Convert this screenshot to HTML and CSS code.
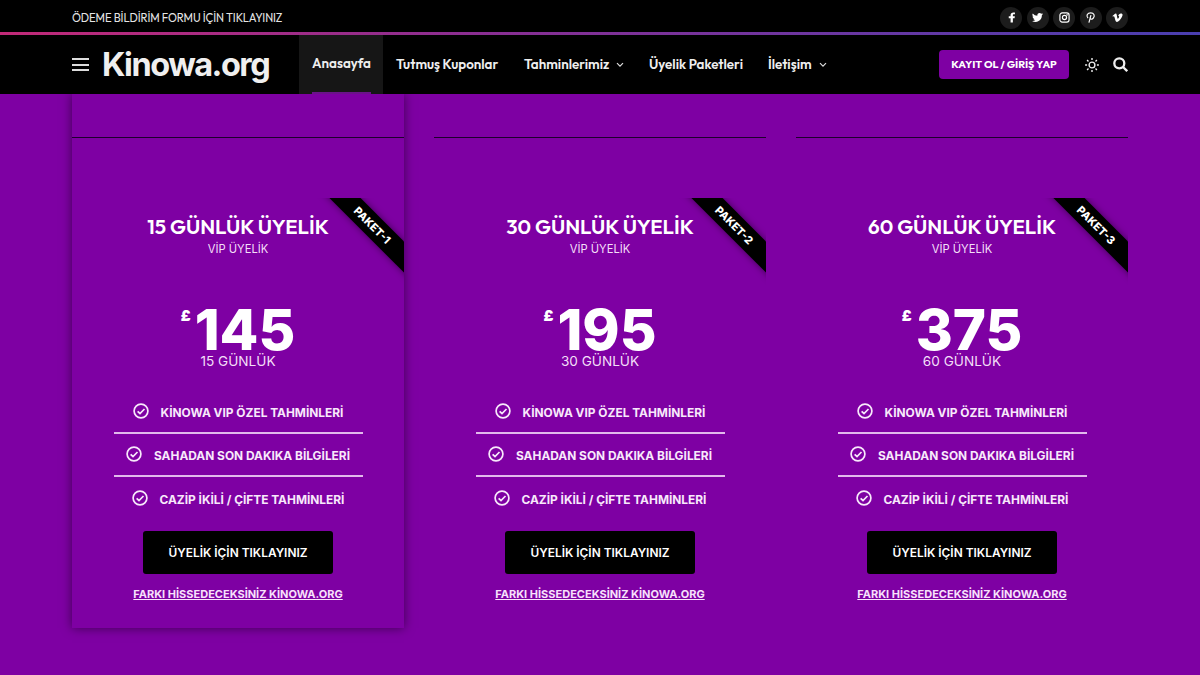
FILE: index.html
```html
<!DOCTYPE html>
<html lang="tr">
<head>
  <meta charset="UTF-8">
  <meta name="viewport" content="width=device-width, initial-scale=1.0">
  <title>Kinowa.org</title>
  <link rel="stylesheet" href="styles.css">
</head>
<body>
  <header>
    <div class="topbar">
      <div class="container">
        <a class="notice" href="#">ÖDEME BİLDİRİM FORMU İÇİN TIKLAYINIZ</a>
        <div class="social">
          <a href="#" aria-label="Facebook"><svg viewBox="0 0 24 24"><path d="M15 23v-9.500h3.700l.6-4.300H15V7c0-1.300.5-2 2.200-2h2.300V1.200C18.600 1.100 17.500 1 16.200 1 12.400 1 10 3.200 10 6.600v2.600H6v4.300h4V23z"/></svg></a>
          <a href="#" aria-label="Twitter"><svg viewBox="0 0 24 24"><path d="M24 4.600a10 10 0 0 1-2.800.8 5 5 0 0 0 2.100-2.700 10 10 0 0 1-3.100 1.200 4.900 4.900 0 0 0-8.400 4.500A14 14 0 0 1 1.700 3.100a4.900 4.900 0 0 0 1.500 6.600 5 5 0 0 1-2.200-.6 4.900 4.900 0 0 0 3.900 4.900 5 5 0 0 1-2.200.1 4.900 4.900 0 0 0 4.600 3.400A10 10 0 0 1 0 19.500 14 14 0 0 0 21.500 7.100 10 10 0 0 0 24 4.600z"/></svg></a>
          <a href="#" aria-label="Instagram"><svg class="line" viewBox="0 0 24 24"><rect x="2" y="2" width="20" height="20" rx="5"/><circle cx="12" cy="12" r="4.500"/><circle cx="17.700" cy="6.300" r=".5"/></svg></a>
          <a href="#" aria-label="Pinterest"><svg class="line" viewBox="0 0 24 24"><path d="M6.500 13.500C1.500 8 5.500 1.800 12.500 1.800S22 8 18.500 13s-8 2.500-7.500-1M13 7L8.500 23"/></svg></a>
          <a href="#" aria-label="Vimeo"><svg viewBox="0 0 24 24"><path d="M23 6.800c-.1 2.200-1.600 5.200-4.600 9-3.100 4-5.700 6-7.800 6-1.300 0-2.400-1.200-3.300-3.700L5.500 11.600C4.800 9.100 4.100 8.900 2.200 10.300L1 8.700l3.800-3.400C8.500 2 9.800 3.200 10.500 7.300c1.300 8.400 1.900 9 4.300 5 1.500-2.300 1.200-4.200-1.400-3.200C14.500 5.400 16.700 3.400 19.600 3.500 22 3.600 23.100 4.600 23 6.800z"/></svg></a>
        </div>
      </div>
    </div>
    <div class="navbar">
      <div class="container">
        <button class="burger" aria-label="Menü"><span></span><span></span><span></span></button>
        <a class="logo" href="#">Kinowa.org</a>
        <nav class="menu">
          <a class="item-home active" href="#"><span>Anasayfa</span></a>
          <a class="item-coupons" href="#">Tutmuş Kuponlar</a>
          <a class="item-tips" href="#">Tahminlerimiz<svg class="caret" viewBox="0 0 8 6"><path d="M1 1.200l3 3 3-3"/></svg></a>
          <a class="item-plans" href="#">Üyelik Paketleri</a>
          <a class="item-contact" href="#">İletişim<svg class="caret" viewBox="0 0 8 6"><path d="M1 1.200l3 3 3-3"/></svg></a>
        </nav>
        <div class="actions">
          <a class="login" href="#">KAYIT OL / GİRİŞ YAP</a>
          <svg class="sun" viewBox="0 0 14 14"><circle cx="7" cy="7" r="2.900"/><path d="M7 .1v2M7 11.900v2M.1 7h2M11.900 7h2M2.100 2.100l1.400 1.400M10.500 10.500l1.400 1.400M2.100 11.900l1.400-1.400M10.500 3.500l1.400-1.400"/></svg>
          <svg class="search" viewBox="0 0 15 15"><circle cx="6.300" cy="6.300" r="5"/><path d="M10 10l4.200 4.200"/></svg>
        </div>
      </div>
    </div>
  </header>

  <main class="pricing container">
    <section class="plan featured">
      <hr>
      <div class="plan-body">
        <div class="ribbon"><span>PAKET-1</span></div>
        <h3>15 GÜNLÜK ÜYELİK</h3>
        <p class="subtitle">VİP ÜYELİK</p>
        <div class="price"><sup>£</sup><span>145</span></div>
        <p class="period">15 GÜNLÜK</p>
        <ul>
          <li><svg class="check" viewBox="0 0 16 16"><circle cx="8" cy="8" r="6.900"/><path d="M4.600 8.300l2.400 2.200 4.500-4.500"/></svg>KİNOWA VIP ÖZEL TAHMİNLERİ</li>
          <li><svg class="check" viewBox="0 0 16 16"><circle cx="8" cy="8" r="6.900"/><path d="M4.600 8.300l2.400 2.200 4.500-4.500"/></svg>SAHADAN SON DAKIKA BİLGİLERİ</li>
          <li><svg class="check" viewBox="0 0 16 16"><circle cx="8" cy="8" r="6.900"/><path d="M4.600 8.300l2.400 2.200 4.500-4.500"/></svg>CAZİP İKİLİ / ÇİFTE TAHMİNLERİ</li>
        </ul>
        <a class="buy" href="#">ÜYELİK İÇİN TIKLAYINIZ</a>
        <a class="more" href="#">FARKI HİSSEDECEKSİNİZ KİNOWA.ORG</a>
      </div>
    </section>

    <section class="plan">
      <hr>
      <div class="plan-body">
        <div class="ribbon"><span>PAKET-2</span></div>
        <h3>30 GÜNLÜK ÜYELİK</h3>
        <p class="subtitle">VİP ÜYELİK</p>
        <div class="price"><sup>£</sup><span>195</span></div>
        <p class="period">30 GÜNLÜK</p>
        <ul>
          <li><svg class="check" viewBox="0 0 16 16"><circle cx="8" cy="8" r="6.900"/><path d="M4.600 8.300l2.400 2.200 4.500-4.500"/></svg>KİNOWA VIP ÖZEL TAHMİNLERİ</li>
          <li><svg class="check" viewBox="0 0 16 16"><circle cx="8" cy="8" r="6.900"/><path d="M4.600 8.300l2.400 2.200 4.500-4.500"/></svg>SAHADAN SON DAKIKA BİLGİLERİ</li>
          <li><svg class="check" viewBox="0 0 16 16"><circle cx="8" cy="8" r="6.900"/><path d="M4.600 8.300l2.400 2.200 4.500-4.500"/></svg>CAZİP İKİLİ / ÇİFTE TAHMİNLERİ</li>
        </ul>
        <a class="buy" href="#">ÜYELİK İÇİN TIKLAYINIZ</a>
        <a class="more" href="#">FARKI HİSSEDECEKSİNİZ KİNOWA.ORG</a>
      </div>
    </section>

    <section class="plan">
      <hr>
      <div class="plan-body">
        <div class="ribbon"><span>PAKET-3</span></div>
        <h3>60 GÜNLÜK ÜYELİK</h3>
        <p class="subtitle">VİP ÜYELİK</p>
        <div class="price"><sup>£</sup><span>375</span></div>
        <p class="period">60 GÜNLÜK</p>
        <ul>
          <li><svg class="check" viewBox="0 0 16 16"><circle cx="8" cy="8" r="6.900"/><path d="M4.600 8.300l2.400 2.200 4.500-4.500"/></svg>KİNOWA VIP ÖZEL TAHMİNLERİ</li>
          <li><svg class="check" viewBox="0 0 16 16"><circle cx="8" cy="8" r="6.900"/><path d="M4.600 8.300l2.400 2.200 4.500-4.500"/></svg>SAHADAN SON DAKIKA BİLGİLERİ</li>
          <li><svg class="check" viewBox="0 0 16 16"><circle cx="8" cy="8" r="6.900"/><path d="M4.600 8.300l2.400 2.200 4.500-4.500"/></svg>CAZİP İKİLİ / ÇİFTE TAHMİNLERİ</li>
        </ul>
        <a class="buy" href="#">ÜYELİK İÇİN TIKLAYINIZ</a>
        <a class="more" href="#">FARKI HİSSEDECEKSİNİZ KİNOWA.ORG</a>
      </div>
    </section>
  </main>
</body>
</html>
```
FILE: styles.css
```css
* {
  box-sizing: border-box;
}
body {
  margin: 0;
  height: 675px;
  overflow: hidden;
  background: #7e00a3;
  color: #fff;
  font-family: Inter, sans-serif;
}
a {
  color: inherit;
  text-decoration: none;
}
svg {
  display: block;
  flex: none;
}
.container {
  width: 1056px;
  margin: 0 auto;
  display: flex;
}

/* header */
header {
  position: relative;
  z-index: 2;
  background: #000;
  font-family: Outfit, Lato, sans-serif;
}
.topbar .container {
  height: 32px;
  align-items: center;
  justify-content: space-between;
}
.notice {
  font-size: 11.250px;
  line-height: 16px;
  color: #e4e4e4;
  padding-top: 3px;
  letter-spacing: -0.1px;
}
.social {
  display: flex;
  gap: 4.500px;
  padding-top: 3px;
}
.social a {
  width: 22px;
  height: 22px;
  border-radius: 50%;
  background: #1c1c1c;
  display: flex;
  align-items: center;
  justify-content: center;
}
.social svg {
  width: 11px;
  height: 11px;
  fill: #fff;
}
.social .line {
  fill: none;
  stroke: #fff;
  stroke-width: 2.600;
}
.navbar {
  height: 62px;
  border-top: 3px solid;
  border-image: linear-gradient(90deg, #c22a78, #8a2e92 40%, #4a3fb0) 1;
}
.navbar .container {
  height: 59px;
  align-items: center;
}
.burger {
  width: 18px;
  height: 13px;
  padding: 0;
  border: 0;
  background: none;
  display: flex;
  flex-direction: column;
  justify-content: space-between;
}
.burger span {
  width: 17px;
  height: 2px;
  background: #ddd;
}
.logo {
  width: 168px;
  margin-left: 12px;
  font: 700 32.500px/40px Inter, sans-serif;
  letter-spacing: -1.500px;
  color: #efefef;
  white-space: nowrap;
}
.menu {
  display: flex;
  align-self: stretch;
  margin-left: 29px;
  font-size: 13.400px;
  font-weight: 600;
}
.menu a {
  display: flex;
  align-items: center;
  padding: 0 0 2px 13px;
  color: #eee;
  white-space: nowrap;
}
.menu .active {
  background: #161616;
  padding-bottom: 0;
}
.active span {
  height: 100%;
  width: 59px;
  line-height: 57px;
  border-bottom: 2px solid #6b128a;
}
.item-home {
  width: 84px;
}
.item-coupons {
  width: 128px;
}
.item-tips {
  width: 125px;
}
.item-plans {
  width: 119px;
}
.caret {
  width: 8px;
  height: 6px;
  margin: 3px 0 0 7px;
  fill: none;
  stroke: #ddd;
  stroke-width: 1.200;
}
.actions {
  display: flex;
  align-items: center;
  margin-left: auto;
}
.login {
  width: 130px;
  height: 29px;
  border-radius: 4px;
  background: #7e00a3;
  font-size: 10.700px;
  font-weight: 700;
  line-height: 28px;
  text-align: center;
  white-space: nowrap;
}
.sun {
  width: 14px;
  height: 14px;
  margin: 0 14px 0 16px;
  fill: none;
  stroke: #eee;
  stroke-width: 1.400;
}
.search {
  width: 15px;
  height: 15px;
  fill: none;
  stroke: #eee;
  stroke-width: 2.300;
}

/* pricing table */
.pricing {
  gap: 30px;
}
.plan {
  width: 332px;
  height: 534px;
  padding-top: 43px;
}
.featured {
  box-shadow: 0 0 10px rgba(0, 0, 0, 0.5);
}
.plan hr {
  margin: 0 0 60px;
  border: 0;
  height: 1px;
  background: #1e002c;
}
.plan-body {
  position: relative;
  display: flex;
  flex-direction: column;
  align-items: center;
  padding-top: 14px;
}
.ribbon {
  position: absolute;
  top: 0;
  right: 0;
  width: 90px;
  height: 90px;
  overflow: hidden;
}
.ribbon span {
  position: absolute;
  top: 18px;
  left: -15.500px;
  width: 150px;
  height: 22px;
  padding-right: 5px;
  transform: rotate(45deg);
  background: #000;
  box-shadow: 0 0 7px rgba(0, 0, 0, 0.5);
  font-size: 11px;
  font-weight: 800;
  line-height: 22px;
  text-align: center;
}
h3 {
  margin: 0 0 1px;
  font: 600 20.500px/28px Outfit, Lato, sans-serif;
  white-space: nowrap;
}
p {
  margin: 0;
}
.subtitle {
  font-size: 11.200px;
  line-height: 16px;
  color: #f3dff8;
}
.price {
  display: flex;
  margin-top: 45px;
  height: 49px;
  font-weight: 800;
}
.price sup {
  font-size: 15px;
  font-weight: 900;
  line-height: 27px;
  margin-right: 4px;
}
.price span {
  font-size: 56.500px;
  line-height: 56px;
}
.period {
  font-size: 13.600px;
  line-height: 20px;
  color: #f3dff8;
}
ul {
  width: 249px;
  margin: 20px 0 0;
  padding: 0;
  list-style: none;
}
li {
  display: flex;
  align-items: center;
  justify-content: center;
  height: 43px;
  padding-top: 2px;
  border-bottom: 2px solid #e2b9ec;
  font-size: 11.900px;
  font-weight: 700;
  color: #f8e9fb;
  white-space: nowrap;
}
li:last-child {
  height: 42px;
  border-bottom: 0;
}
.check {
  width: 16px;
  height: 16px;
  margin-right: 12px;
  margin-top: -3px;
  fill: none;
  stroke: #f8e9fb;
  stroke-width: 1.700;
}
.buy {
  width: 190px;
  height: 43px;
  margin-top: 12px;
  border-radius: 3px;
  background: #000;
  font-size: 11.900px;
  font-weight: 600;
  line-height: 43px;
  text-align: center;
}
.more {
  margin-top: 12px;
  font-size: 11px;
  font-weight: 700;
  line-height: 16px;
  color: #f8e0fc;
  text-decoration: underline;
}
```
